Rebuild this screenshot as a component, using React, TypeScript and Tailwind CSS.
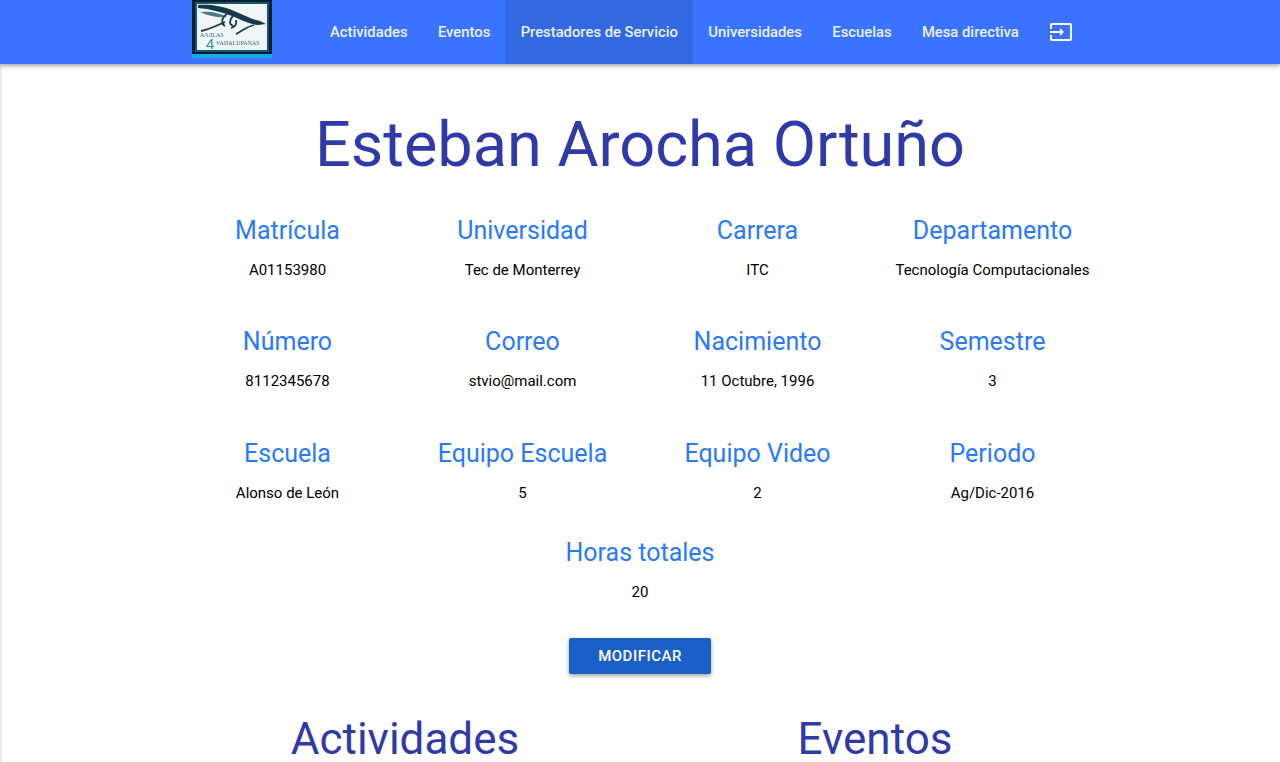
const navItems = [
  { label: 'Actividades' },
  { label: 'Eventos' },
  { label: 'Prestadores de Servicio', active: true },
  { label: 'Universidades' },
  { label: 'Escuelas' },
  { label: 'Mesa directiva' },
];

const rows = [
  [
    ['Matrícula', 'A01153980'],
    ['Universidad', 'Tec de Monterrey'],
    ['Carrera', 'ITC'],
    ['Departamento', 'Tecnología Computacionales'],
  ],
  [
    ['Número', '8112345678'],
    ['Correo', 'stvio@mail.com'],
    ['Nacimiento', '11 Octubre, 1996'],
    ['Semestre', '3'],
  ],
  [
    ['Escuela', 'Alonso de León'],
    ['Equipo Escuela', '5'],
    ['Equipo Video', '2'],
    ['Periodo', 'Ag/Dic-2016'],
  ],
];

const Logo = () => (
  <svg width="80" height="58" viewBox="0 0 80 58" className="block shrink-0 blur-[0.4px]">
    <rect width="80" height="54" fill="#071c2c" />
    <rect x="0" y="54" width="80" height="4" fill="#1aa9e8" />
    <rect x="3" y="2" width="74" height="50" fill="#0f5a70" />
    <rect x="5" y="4" width="70" height="46" fill="#eef5f4" />
    {/* the bird */}
    <path d="M6 5 C18 4 30 6 40 10 C50 14 58 19 68 21 L74 24 L66 25 C56 24 48 19 40 16 C30 12 18 9 6 8 Z" fill="#16384c" />
    <path d="M8 12 C18 11 28 13 35 17 C26 18 16 16 8 12 Z" fill="#4a7c8c" />
    <path d="M35 14 C29 18 29 24 33 26 M41 16 C37 20 37 24 41 26 M44 20 C45 25 43 27 39 28 M33 22 C24 26 16 30 9 31" fill="none" stroke="#16384c" strokeWidth="1.8" />
    <path d="M44 34 C50 31 54 27 62 25" fill="none" stroke="#16384c" strokeWidth="1.6" />
    <text x="8" y="37" fontSize="6" fill="#2a6a74" fontFamily="Liberation Serif, serif">A/UILAS</text>
    <text x="14" y="49" fontSize="15" fill="#3a8a96" fontFamily="Liberation Sans, sans-serif">4</text>
    <text x="24" y="45" fontSize="6" fill="#2a6a74" fontFamily="Liberation Serif, serif">VADALUPANAS</text>
  </svg>
);

const App = () => {
  return (
    <div className="h-[762px] overflow-hidden bg-white font-['Roboto',sans-serif] shadow-[inset_2px_0_3px_-1px_rgba(0,0,0,0.15)]">
      <nav className="h-16 bg-[#3973ff] shadow-[0_2px_4px_rgba(0,0,0,0.35)] relative">
        <div className="ml-[192px] flex items-start">
          <Logo />
          <ul className="ml-[42.8px] flex h-16">
            {navItems.map((item) => (
              <li
                key={item.label}
                className={`flex items-center px-[15.2px] text-[14.8px] font-medium text-white/90 ${item.active ? 'bg-[#3269e3] text-white' : ''}`}
              >
                {item.label}
              </li>
            ))}
            <li className="flex items-center px-[15px]">
              <svg width="24" height="24" viewBox="0 0 24 24" fill="white">
                <path d="M21 3.010H3c-1.100 0-2 .9-2 2V9h2V4.990h18v14.030H3V15H1v4.010c0 1.100.9 1.980 2 1.980h18c1.100 0 2-.88 2-1.980v-14c0-1.110-.9-2-2-2zM11 16l4-4-4-4v3H1v2h10v3z" />
              </svg>
            </li>
          </ul>
        </div>
      </nav>

      <main className="w-[940px] mx-auto flex flex-col items-center">
        <h1 className="mt-[41px] text-[63px] leading-[80px] text-[#3039a8]">Esteban Arocha Ortuño</h1>

        <div className="mt-[31px] w-full flex flex-col gap-[47.4px]">
          {rows.map((row, i) => (
            <div key={i} className="grid grid-cols-4 text-center">
              {row.map(([title, value]) => (
                <div key={title}>
                  <h4 className="text-[25px] leading-[30px] text-[#2979ff]">{title}</h4>
                  <p className="mt-[14px] text-[15px] leading-[20px] text-black">{value}</p>
                </div>
              ))}
            </div>
          ))}
        </div>

        <div className="mt-[35.2px] text-center">
          <h4 className="text-[25px] leading-[30px] text-[#2979ff]">Horas totales</h4>
          <p className="mt-[14px] text-[15px] leading-[20px] text-black">20</p>
        </div>

        <button className="mt-[36px] w-[142px] h-9 rounded-[2px] bg-[#1a60c8] text-[15px] font-medium tracking-[0.5px] text-white shadow-[0_2px_4px_rgba(0,0,0,0.35)]">
          MODIFICAR
        </button>

        <div className="mt-[37px] w-full grid grid-cols-2 text-center">
          <h2 className="text-[44px] leading-[56px] text-[#3039a8]">Actividades</h2>
          <h2 className="text-[44px] leading-[56px] text-[#3039a8]">Eventos</h2>
        </div>
      </main>
    </div>
  );
};

export default App;
